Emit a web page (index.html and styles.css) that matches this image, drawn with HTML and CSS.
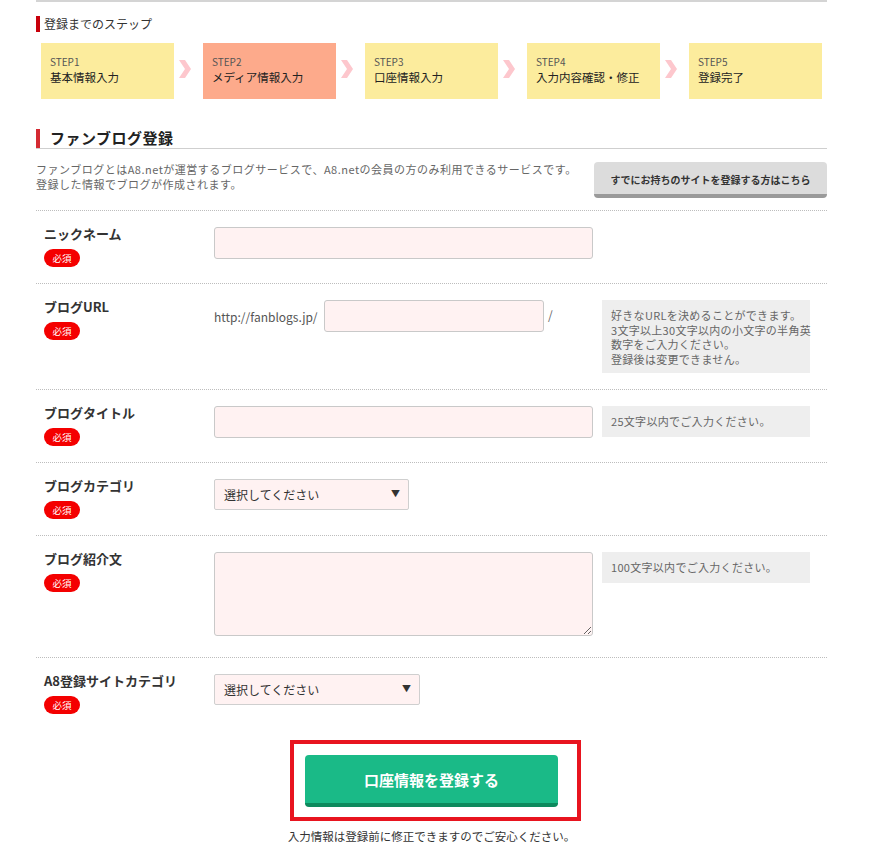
FILE: index.html
```html
<!DOCTYPE html>
<html lang="ja">
<head>
<meta charset="utf-8">
<title>ファンブログ登録</title>
<link rel="stylesheet" href="styles.css">
</head>
<body>
<div class="page">
  <div class="steps-title">登録までのステップ</div>
  <div class="steps">
    <div class="step"><span class="step-no">STEP1</span><span class="step-name">基本情報入力</span></div>
    <svg class="arrow" width="29" height="56" viewBox="0 0 29 56"><path d="M5 17 H11 L17 26 L11 35 H5 L11 26 Z" fill="#fdc7cd"/></svg>
    <div class="step active"><span class="step-no">STEP2</span><span class="step-name">メディア情報入力</span></div>
    <svg class="arrow" width="29" height="56" viewBox="0 0 29 56"><path d="M5 17 H11 L17 26 L11 35 H5 L11 26 Z" fill="#fdc7cd"/></svg>
    <div class="step"><span class="step-no">STEP3</span><span class="step-name">口座情報入力</span></div>
    <svg class="arrow" width="29" height="56" viewBox="0 0 29 56"><path d="M5 17 H11 L17 26 L11 35 H5 L11 26 Z" fill="#fdc7cd"/></svg>
    <div class="step"><span class="step-no">STEP4</span><span class="step-name">入力内容確認・修正</span></div>
    <svg class="arrow" width="29" height="56" viewBox="0 0 29 56"><path d="M5 17 H11 L17 26 L11 35 H5 L11 26 Z" fill="#fdc7cd"/></svg>
    <div class="step"><span class="step-no">STEP5</span><span class="step-name">登録完了</span></div>
  </div>

  <h2 class="heading"><span class="heading-text">ファンブログ登録</span></h2>

  <div class="intro">
    <p class="intro-text">ファンブログとはA8.netが運営するブログサービスで、A8.netの会員の方のみ利用できるサービスです。<br>登録した情報でブログが作成されます。</p>
    <a class="btn-gray" href="#">すでにお持ちのサイトを登録する方はこちら</a>
  </div>

  <div class="form">
    <div class="row">
      <div class="label"><div class="label-text">ニックネーム</div><span class="req">必須</span></div>
      <div class="field"><input class="text-input" type="text"></div>
    </div>
    <div class="row">
      <div class="label"><div class="label-text">ブログURL</div><span class="req">必須</span></div>
      <div class="field url-field">
        <span class="url-prefix">http://fanblogs.jp/</span>
        <input class="text-input url-input" type="text">
        <span class="url-slash">/</span>
      </div>
      <div class="help">好きなURLを決めることができます。<br>3文字以上30文字以内の小文字の半角英<br>数字をご入力ください。<br>登録後は変更できません。</div>
    </div>
    <div class="row">
      <div class="label"><div class="label-text">ブログタイトル</div><span class="req">必須</span></div>
      <div class="field"><input class="text-input" type="text"></div>
      <div class="help">25文字以内でご入力ください。</div>
    </div>
    <div class="row">
      <div class="label"><div class="label-text">ブログカテゴリ</div><span class="req">必須</span></div>
      <div class="field"><div class="select sel-blog"><span>選択してください</span><span class="caret">▼</span></div></div>
    </div>
    <div class="row">
      <div class="label"><div class="label-text">ブログ紹介文</div><span class="req">必須</span></div>
      <div class="field"><textarea class="textarea"></textarea></div>
      <div class="help">100文字以内でご入力ください。</div>
    </div>
    <div class="row">
      <div class="label"><div class="label-text">A8登録サイトカテゴリ</div><span class="req">必須</span></div>
      <div class="field"><div class="select sel-a8"><span>選択してください</span><span class="caret">▼</span></div></div>
    </div>
  </div>

  <div class="submit-area">
    <div class="submit-wrap"><button class="submit" type="button">口座情報を登録する</button></div>
    <p class="note">入力情報は登録前に修正できますのでご安心ください。</p>
  </div>
</div>
</body>
</html>
```

FILE: styles.css
```css
* { box-sizing: border-box; }
body {
  margin: 0;
  background: #fff;
  font-family: "Noto Sans CJK JP", "Noto Sans", sans-serif;
  color: #333;
}
.page {
  width: 791px;
  margin-left: 36px;
  border-top: 2px solid #d4d4d4;
  padding-bottom: 20px;
}
.steps-title {
  margin-top: 14px;
  border-left: 4px solid #c8000b;
  padding-left: 4px;
  font-size: 12px;
  line-height: 16px;
  height: 16px;
  color: #333;
}
.steps {
  display: flex;
  margin-top: 11px;
  margin-left: 5px;
}
.step {
  width: 133px;
  height: 56px;
  background: #fcec9d;
  padding: 12px 0 0 9px;
  display: flex;
  flex-direction: column;
}
.step.active { background: #fdaa8b; }
.step-no {
  font-size: 10px;
  line-height: 14px;
  color: #555;
}
.step-name {
  font-size: 11.5px;
  line-height: 16px;
  color: #222;
}
.arrow { display: block; flex: none; }

.heading {
  margin: 30px 0 0;
  border-bottom: 1px solid #cfcfcf;
  font-size: 15px;
  font-weight: 700;
  line-height: 19px;
}
.heading-text {
  display: block;
  border-left: 4px solid #d42a32;
  padding-left: 10px;
  height: 19px;
  line-height: 18px;
  color: #222;
  letter-spacing: 0.5px;
}
.intro {
  display: flex;
  justify-content: space-between;
  align-items: flex-start;
  margin-top: 13px;
  margin-bottom: 12px;
}
.intro-text {
  margin: 0;
  font-size: 11px;
  line-height: 15px;
  letter-spacing: 0.5px;
  color: #666;
}
.btn-gray {
  width: 233px;
  height: 36px;
  background: #dcdcdc;
  border-bottom: 4px solid #9a9a9a;
  border-radius: 4px;
  display: flex;
  align-items: center;
  justify-content: center;
  font-size: 10px;
  font-weight: 700;
  color: #333;
  text-decoration: none;
  padding-top: 2px;
}

.row {
  display: flex;
  align-items: flex-start;
  border-top: 1px dotted #bdbdbd;
  padding: 14px 0 16px 8px;
}
.label {
  width: 170px;
  flex: none;
}
.label-text {
  font-size: 13px;
  font-weight: 700;
  line-height: 18px;
  color: #333;
}
.req {
  display: inline-flex;
  align-items: center;
  justify-content: center;
  margin-top: 6px;
  width: 36px;
  height: 18px;
  border-radius: 9px;
  background: #f40000;
  color: #fff;
  font-size: 9.5px;
}
.field {
  width: 388px;
  flex: none;
  padding-top: 2px;
  display: flex;
  align-items: center;
}
.text-input {
  width: 379px;
  height: 32px;
  border: 1px solid #c9c9c9;
  border-radius: 3px;
  background: #fff2f2;
  margin: 0;
  font: inherit;
}
.url-prefix {
  font-size: 12px;
  color: #555;
  width: 110px;
  flex: none;
}
.url-input { width: 220px; }
.url-slash {
  font-size: 12px;
  color: #666;
  margin-left: 4px;
  align-self: flex-start;
  margin-top: 6px;
}
.help {
  width: 208px;
  min-height: 31px;
  background: #eeeeee;
  margin-top: 2px;
  padding: 8px 9px 7px;
  font-size: 11px;
  line-height: 14.5px;
  letter-spacing: 0.3px;
  color: #666;
  white-space: nowrap;
}
.select {
  height: 31px;
  border: 1px solid #cfcfcf;
  border-radius: 2px;
  background: #fff2f2;
  display: flex;
  align-items: center;
  justify-content: space-between;
  padding: 0 8px 0 9px;
  font-size: 12px;
  color: #333;
}
.sel-blog { width: 195px; }
.sel-a8 { width: 206px; }
.caret {
  font-size: 9px;
  color: #333;
  margin-top: -3px;
}
.textarea {
  display: block;
  width: 379px;
  height: 84px;
  margin: 0 0 5px;
  border: 1px solid #c9c9c9;
  border-radius: 3px;
  background: #fff2f2;
  font: inherit;
}

.submit-area {
  display: flex;
  flex-direction: column;
  align-items: center;
  margin-top: 25px;
}
.submit-wrap { position: relative; }
.submit-wrap::after {
  content: "";
  position: absolute;
  top: -15px;
  left: -15px;
  right: -23px;
  bottom: -14px;
  border: 4px solid #e8141f;
  pointer-events: none;
}
.submit {
  display: block;
  width: 253px;
  height: 52px;
  border: none;
  border-bottom: 4px solid #0d8a5d;
  border-radius: 4px;
  background: #1aba87;
  color: #fff;
  font-family: inherit;
  font-size: 15px;
  font-weight: 700;
  padding: 0;
  margin: 0;
}
.note {
  margin: 21px 0 0;
  font-size: 11.5px;
  line-height: 16px;
  color: #333;
}
```
